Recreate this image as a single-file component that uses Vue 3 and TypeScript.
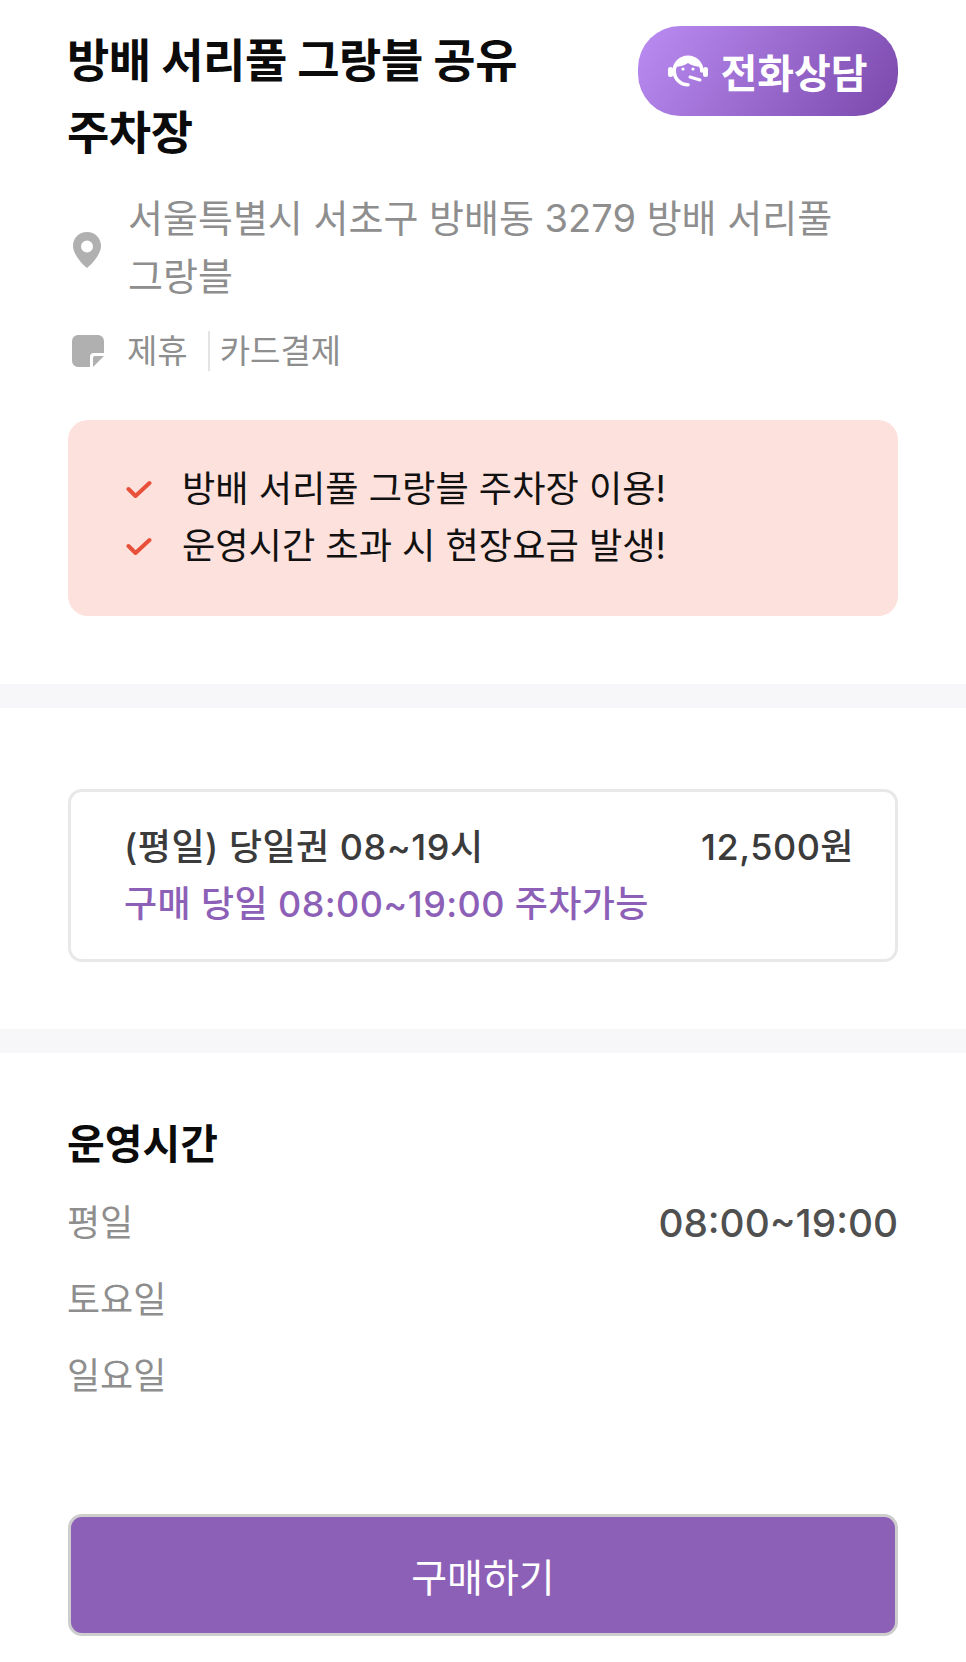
<script setup lang="ts">
const notices = ['방배 서리풀 그랑블 주차장 이용!', '운영시간 초과 시 현장요금 발생!']
const hours = [
  { day: '평일', time: '08:00~19:00' },
  { day: '토요일', time: '' },
  { day: '일요일', time: '' },
]
</script>

<template>
  <div class="page">
    <section class="info">
      <div class="head">
        <h1 class="title">방배 서리풀 그랑블 공유 주차장</h1>
        <button class="call">
          <svg class="call-icon" viewBox="0 0 40 32" width="40" height="32">
            <path d="M20 29.800A13.800 13.800 0 1 1 33.800 16" fill="none" stroke="#fff" stroke-width="3.600" stroke-linecap="round"/>
            <path fill="#fff" d="M7 12A13.800 13.800 0 0 1 33 12C28 11.500 23 10.500 20 8 17 10.500 12 11.500 7 12z"/>
            <rect x="0" y="12" width="5" height="10" rx="2.500" fill="#fff"/>
            <rect x="35" y="12" width="5" height="10" rx="2.500" fill="#fff"/>
            <circle cx="15" cy="14" r="1.600" fill="#fff"/>
            <circle cx="25" cy="14" r="1.600" fill="#fff"/>
            <path d="M22 22l10 3" stroke="#fff" stroke-width="3" stroke-linecap="round"/>
          </svg>
          <span>전화상담</span>
        </button>
      </div>
      <div class="meta address">
        <svg class="meta-icon pin" viewBox="0 0 30 36" width="30" height="36">
          <path fill="#b0b0b0" fill-rule="evenodd" d="M15 0C7 0 1 6 1 14c0 8 9 18 14 22 5-4 14-14 14-22C29 6 23 0 15 0zm0 8.500a6 6 0 1 1 0 12 6 6 0 0 1 0-12z"/>
        </svg>
        <p>서울특별시 서초구 방배동 3279 방배 서리풀 그랑블</p>
      </div>
      <div class="meta tags">
        <svg class="meta-icon" viewBox="0 0 32 32" width="32" height="32">
          <path fill="#b0b0b0" d="M6 0h20a6 6 0 0 1 6 6v12H22a4 4 0 0 0-4 4v10H6a6 6 0 0 1-6-6V6a6 6 0 0 1 6-6z"/>
          <path fill="#b0b0b0" d="M21 32v-9a2 2 0 0 1 2-2h9z"/>
        </svg>
        <span class="tag">제휴</span>
        <span class="sep"></span>
        <span class="tag card-tag">카드결제</span>
      </div>
      <ul class="notice">
        <li v-for="n in notices" :key="n">
          <svg viewBox="0 0 26 20" width="26" height="20">
            <path d="M2.500 9l7 7L23.500 3" fill="none" stroke="#e8503a" stroke-width="4" stroke-linecap="round" stroke-linejoin="round"/>
          </svg>
          <span>{{ n }}</span>
        </li>
      </ul>
    </section>

    <div class="band"></div>

    <section class="tickets">
      <div class="ticket">
        <div class="ticket-row">
          <span>(평일) 당일권 08~19시</span>
          <span>12,500원</span>
        </div>
        <div class="ticket-sub">구매 당일 08:00~19:00 주차가능</div>
      </div>
    </section>

    <div class="band"></div>

    <section class="hours">
      <h2>운영시간</h2>
      <div v-for="h in hours" :key="h.day" class="hour-row">
        <span class="day">{{ h.day }}</span>
        <span class="time">{{ h.time }}</span>
      </div>
    </section>

    <div class="footer">
      <button class="buy">구매하기</button>
    </div>
  </div>
</template>

<style scoped>
.page { width: 966px; height: 1662px; overflow: hidden; background: #fff; font-family: Inter, "Noto Sans CJK KR", sans-serif; color: #111; }
.info { padding: 24px 68px 68px; }
.head { display: flex; justify-content: space-between; align-items: flex-start; }
.title { margin: 0 0 0 -1px; width: 480px; font-size: 46px; line-height: 72px; font-weight: 700; color: #0b0b0b; letter-spacing: -0.45px; word-break: keep-all; }
.call { margin-top: 2px; width: 260px; height: 90px; flex: none; border: 0; border-radius: 42px; background: linear-gradient(125deg, #bb8df3 0%, #7a48ab 100%); color: #fff; font: inherit; font-size: 40px; font-weight: 700; display: flex; align-items: center; justify-content: center; gap: 12px; padding: 0; }
.call-icon { flex: none; }
.meta { display: flex; align-items: center; color: #8e8e8e; }
.meta-icon { flex: none; }
.pin { margin-top: 6px; }
.address { margin-top: 21px; gap: 26px; padding-left: 4px; }
.address p { margin: 0; font-size: 38px; line-height: 58px; width: 710px; }
.tags { margin-top: 16px; font-size: 33px; padding-left: 4px; height: 60px; }
.tag { line-height: 40px; }
.tags .meta-icon + .tag { margin-left: 23px; }
.sep { width: 2px; height: 40px; background: #e4e4e4; margin: 0 10px 0 20px; }
.notice { list-style: none; margin: 39px 0 0; padding: 41px 56px 40px 58px; height: 196px; box-sizing: border-box; background: #fde1dc; border-radius: 20px; }
.notice li { display: flex; align-items: center; gap: 30px; font-size: 36.200px; line-height: 57px; color: #111; }
.band { height: 24px; background: #f7f7f9; }
.tickets { padding: 81px 68px 67px; }
.ticket { height: 173px; box-sizing: border-box; border: 3px solid #e8e8e8; border-radius: 14px; padding: 27px 41px 0 53px; }
.ticket-row { display: flex; justify-content: space-between; font-size: 36px; line-height: 57px; color: #3b3b3b; font-weight: 500; letter-spacing: 0.5px; }
.ticket-sub { font-size: 36px; line-height: 57px; color: #8d60b8; font-weight: 500; letter-spacing: 0.4px; }
.hours { padding: 63px 68px 0; }
.hours h2 { margin: 0 0 10px -1px; font-size: 41px; line-height: 56px; font-weight: 700; color: #0b0b0b; }
.hour-row { display: flex; justify-content: space-between; align-items: center; height: 76.500px; }
.day { font-size: 36px; color: #8e8e8e; margin-left: -1px; }
.time { font-size: 38.800px; color: #505050; font-weight: 500; margin-top: 5px; }
.footer { padding: 102px 68px 0; }
.buy { width: 100%; height: 122px; box-sizing: border-box; border: 3px solid #cdcdcd; border-radius: 14px; background: #8d60b8; color: #fff; font: inherit; font-size: 39px; }
</style>

<style>
html, body { margin: 0; background: #fff; }
</style>
